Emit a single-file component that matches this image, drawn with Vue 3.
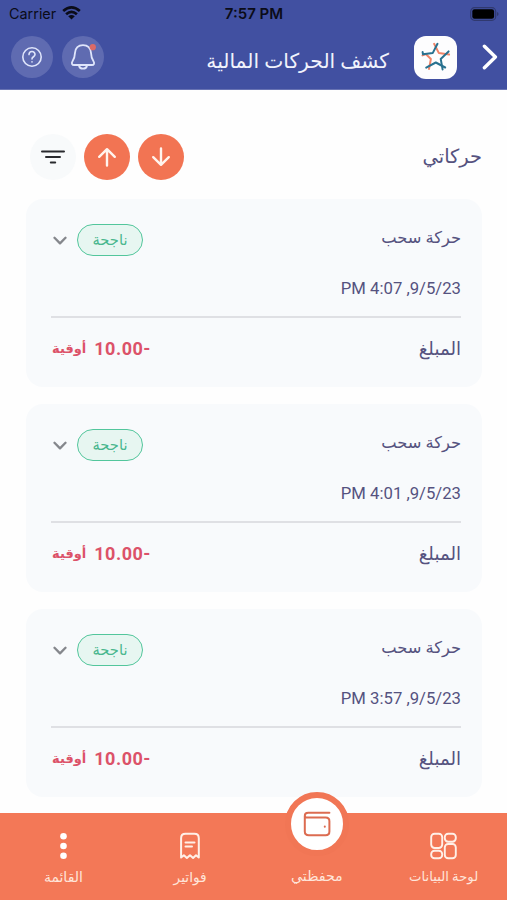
<script setup>
const transactions = [
  { id: 1, date: '9/5/23, 4:07 PM' },
  { id: 2, date: '9/5/23, 4:01 PM' },
  { id: 3, date: '9/5/23, 3:57 PM' },
]
</script>

<template>
  <div class="screen" dir="rtl">
    <header class="header">
      <div class="status" dir="ltr">
        <div class="carrier">
          <span>Carrier</span>
          <svg width="19" height="14" viewBox="0 0 19 14" fill="none" stroke="#0b0c18" stroke-width="2.7">
            <path d="M1.2 5.1Q9.5-2.2 17.8 5.1M4.1 8.3Q9.5 3.6 14.9 8.3" />
            <path d="M6.2 10.2Q9.5 7.6 12.8 10.2L9.5 13.4Z" fill="#0b0c18" stroke="none" />
          </svg>
        </div>
        <span class="clock">7:57 PM</span>
        <svg class="battery" width="29" height="14" viewBox="0 0 29 14">
          <rect x="0.7" y="0.7" width="25" height="12.6" rx="3.8" fill="none" stroke="#30396f" stroke-width="1.2" />
          <rect x="2.3" y="2.3" width="21.8" height="9.4" rx="2.2" fill="#000" />
          <path d="M27 5v4q1.6-.5 1.6-2T27 5" fill="#30396f" />
        </svg>
      </div>
      <div class="titlebar">
        <svg class="back" width="16" height="26" viewBox="0 0 16 26" fill="none" stroke="#fff" stroke-width="3.4" stroke-linecap="round" stroke-linejoin="round">
          <path d="M2.4 2.2 13.4 13 2.4 23.8" />
        </svg>
        <div class="logo">
          <svg width="32" height="32" viewBox="0 0 32 32" fill="none" stroke-width="2" stroke-linecap="round" stroke-linejoin="round">
            <g stroke="#f08468">
              <path d="M14.1 2.8 18.9 12.1 29.1 13.6" />
              <path d="M2.5 14.4 5.8 13.1 10.9 17.9 9 28" />
            </g>
            <g stroke="#28718f">
              <path d="M17.5 2.8 12.7 12.1 3 13.3 2.6 11" />
              <path d="M28.6 10.4 20.7 17.9 22.6 28.4" />
              <path d="M6.2 26.6 15.8 21.5 25.2 26.5" />
            </g>
          </svg>
        </div>
        <h1><span class="t t-title">كشف الحركات المالية</span></h1>
        <div class="round">
          <svg width="26" height="28" viewBox="0 0 26 28" fill="none" stroke="#dfe5fb" stroke-width="1.8" stroke-linecap="round" stroke-linejoin="round">
            <path d="M13 2.2c-4.8 0-7.6 3.3-8 7.7-.2 4.7-.9 6.3-2.6 8.7-1.2 1.8-.3 3.4 1.7 3.4h17.8c2 0 2.9-1.6 1.7-3.4-1.7-2.4-2.4-4-2.6-8.7-.4-4.4-3.2-7.7-8-7.7ZM9 22.5c.6 4.2 7.4 4.2 8 0" />
            <circle cx="22.8" cy="4.2" r="3.1" fill="#dc6a66" stroke="none" />
          </svg>
        </div>
        <div class="round">
          <svg width="22" height="22" viewBox="0 0 22 22" fill="none" stroke="#dfe5fb" stroke-width="1.6" stroke-linecap="round">
            <circle cx="11" cy="11" r="9.2" />
            <path d="M8 8.6c.1-4.2 6.1-4 6 0-.1 2.3-3 2-3 4.4M11 15.8v.2" />
          </svg>
        </div>
      </div>
    </header>

    <main>
      <div class="toolbar">
        <h2><span class="t t-heading">حركاتي</span></h2>
        <div class="tools">
          <button class="tool orange">
            <svg width="20" height="20" viewBox="0 0 20 20"><path d="M10 1.5v16M2.2 10.2 10 17.8l7.8-7.6" /></svg>
          </button>
          <button class="tool orange">
            <svg width="20" height="20" viewBox="0 0 20 20"><path d="M10 18.5v-16M2.2 9.8 10 2.2l7.8 7.6" /></svg>
          </button>
          <button class="tool filter">
            <svg width="26" height="16" viewBox="0 0 26 16"><path d="M2 2.5h22M6 8h14M10.8 13.5h4.4" /></svg>
          </button>
        </div>
      </div>

      <section class="cards">
        <article v-for="item in transactions" :key="item.id" class="card">
          <div class="row kind">
            <span class="t t-kind">حركة سحب</span>
            <div class="state">
              <span class="pill"><span class="t t-pill">ناجحة</span></span>
              <svg width="14" height="10" viewBox="0 0 14 10" fill="none" stroke="#85878c" stroke-width="2.3" stroke-linecap="round" stroke-linejoin="round">
                <path d="M1.5 1.8 7 7.4l5.5-5.6" />
              </svg>
            </div>
          </div>
          <div class="row date"><span class="t t-date">{{ item.date }}</span></div>
          <hr />
          <div class="row total">
            <span class="t t-label">المبلغ</span>
            <div class="amount">
              <span class="t t-number">-10.00</span>
              <span class="t t-unit">أوقية</span>
            </div>
          </div>
        </article>
      </section>
    </main>

    <nav class="nav">
      <a class="tab">
        <svg width="28" height="28" viewBox="0 0 28 28" fill="none" stroke="#fff0e8" stroke-width="1.9">
          <rect x="1.2" y="1.7" width="11" height="14.3" rx="3.4" />
          <rect x="14.8" y="1.7" width="11" height="8" rx="3.4" />
          <rect x="1.2" y="18.7" width="11" height="7.6" rx="3.4" />
          <rect x="14.8" y="12" width="11" height="14.3" rx="3.4" />
        </svg>
        <span class="t t-board">لوحة البيانات</span>
      </a>
      <a class="tab">
        <span class="wallet">
          <svg width="28" height="26" viewBox="0 0 28 26" fill="none" stroke="#dc6c51" stroke-width="2" stroke-linecap="round" stroke-linejoin="round">
            <path d="M26.4 1.8H5.2Q1.8 1.8 1.8 5v15.5q0 3.8 4 3.8h16.8q3.8 0 3.8-3.8V10.2q0-3.6-3.8-3.6H5Q1.8 6.6 1.8 5" />
            <path d="M21.8 15.6v.2" />
          </svg>
        </span>
        <span class="t t-wallet">محفظتي</span>
      </a>
      <a class="tab">
        <svg width="28" height="28" viewBox="0 0 28 28" fill="none" stroke="#fff0e8" stroke-width="2" stroke-linecap="round" stroke-linejoin="round">
          <path d="M5.1 25.5V6.2q0-4.4 4.4-4.4h8.9q4.4 0 4.4 4.4v19.3l-2.8-2.3-2.9 2.8-3.1-2.8-3.1 2.8-3-2.8ZM9.5 10.4h9M9.5 14.6h6.5" />
        </svg>
        <span class="t t-bills">فواتير</span>
      </a>
      <a class="tab">
        <svg width="28" height="28" viewBox="0 0 28 28" fill="#fff">
          <circle cx="14.5" cy="4.2" r="3.3" /><circle cx="14.5" cy="14" r="3.3" /><circle cx="14.5" cy="23.8" r="3.3" />
        </svg>
        <span class="t t-menu">القائمة</span>
      </a>
    </nav>
  </div>
</template>

<style>
body { margin: 0; background: #fefefe; overflow: hidden; }
</style>

<style scoped>
* { box-sizing: border-box; }
.screen { width: 507px; height: 900px; display: flex; flex-direction: column; overflow: hidden; background: #fefefe; font-family: Roboto, "DejaVu Sans", sans-serif; color: #55527f; }
.header { height: 90px; flex: none; background: #4150a1; border-bottom: 1px solid #6873b3; }
.status { height: 27px; padding: 0 8px 0 9px; display: grid; grid-template-columns: 1fr auto 1fr; align-items: center; font: 14.4px/27px Inter, sans-serif; color: #0b0c18; }
.carrier { display: flex; align-items: center; gap: 6px; }
.carrier svg { margin-top: -2px; }
.clock { font-weight: 600; font-size: 15px; }
.battery { justify-self: end; }
.titlebar { height: 60px; padding: 0 9px 0 11px; display: flex; align-items: center; }
.back { flex: none; }
.logo { width: 43px; height: 43px; margin-right: 25px; border-radius: 12px; background: #fdfdfe; display: flex; align-items: center; justify-content: center; }
h1 { flex: 1; margin: 7px 25px 0 0; line-height: 30px; color: #f1f3fc; font-weight: 400; font-size: 20px; }
h2 { margin: 0; font-weight: 400; line-height: 30px; font-size: 19px; }
.round { width: 42px; height: 42px; margin-right: 9px; border-radius: 50%; background: #5f6bb1; display: flex; align-items: center; justify-content: center; }
main { flex: 1; min-height: 0; padding: 44px 25px 0 26px; }
.toolbar { height: 46px; display: flex; justify-content: space-between; align-items: center; padding-left: 4px; }
.tools { display: flex; gap: 8px; }
.tool { width: 46px; height: 46px; padding: 0; border: 0; border-radius: 50%; display: flex; align-items: center; justify-content: center; }
.tool svg { fill: none; stroke: #fff4ee; stroke-width: 2.4; stroke-linecap: round; stroke-linejoin: round; }
.orange { background: #f27453; }
.filter { background: #f8fafb; }
.filter svg { stroke: #292a2e; stroke-width: 2; }
.cards { display: grid; gap: 17.2px; margin-top: 19px; }
.card { height: 188px; border-radius: 17px; background: #f8fafc; padding: 25px 21px 0 25px; }
.row { display: flex; justify-content: space-between; align-items: center; }
.kind { height: 33px; }
.date { height: 60px; padding-top: 2px; }
hr { height: 2px; margin: -1px 0 0; border: 0; background: #dfe0e4; }
.total { height: 60px; }
.state { display: flex; align-items: center; gap: 10px; padding-left: 2px; }
.pill { width: 66px; height: 32px; margin-top: -1px; border: 1.5px solid #53c69c; border-radius: 16px; background: #e7f6f1; color: #49b78e; display: flex; align-items: center; justify-content: center; }
.amount { display: flex; align-items: center; gap: 8px; padding-left: 1px; color: #dc5269; font-weight: 700; }
.nav { height: 87px; flex: none; display: grid; grid-template-columns: repeat(4, 1fr); background: #f37857; color: #ffe5da; position: relative; }
.tab { position: relative; display: flex; flex-direction: column; align-items: center; padding-top: 19px; gap: 8px; }
.wallet { position: absolute; top: -21px; left: 50%; width: 64px; height: 64px; margin-left: -32px; border: 6px solid #f17655; border-radius: 50%; background: #fff; display: flex; align-items: center; justify-content: center; }
.t-wallet { margin-top: 35px; }
.t { display: block; white-space: nowrap; }
.t-title { font-size: 20.3px; }
.t-heading { font-size: 19.4px; }
.t-kind { font-size: 16.3px; margin-top: -6px; }
.t-pill { font-size: 14.7px; margin-top: -1px; }
.t-date { font-size: 16.7px; }
.t-label { font-size: 18.2px; }
.t-number { font-size: 18px; letter-spacing: .5px; }
.t-unit { font-size: 13px; }
.t-board, .t-wallet, .t-bills, .t-menu { font-size: 13.2px; line-height: 18px; }
.t-wallet { font-size: 14.2px; }
.t-bills { font-size: 13.8px; }
.t-menu { font-size: 14px; }
</style>
